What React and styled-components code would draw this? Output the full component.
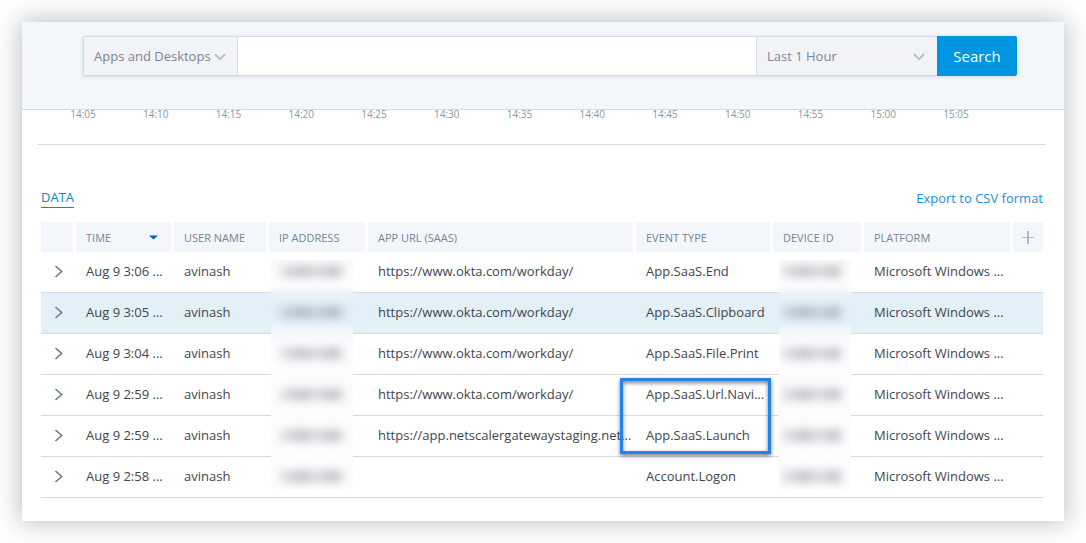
import React from 'react';
import styled, { createGlobalStyle } from 'styled-components';

const GlobalStyle = createGlobalStyle`
  * {
    box-sizing: border-box;
  }
  body {
    margin: 0;
    background-color: #fff;
    font-family: 'Open Sans', 'Noto Sans', sans-serif;
    font-size: 13px;
    color: #43454d;
  }
  button, input, select {
    font-family: inherit;
  }
`;

const Panel = styled.main`
  margin: 22px;
  padding-bottom: 23px;
  background-color: #fff;
  box-shadow: 0 0 24px 2px rgba(70, 80, 92, 0.36);
`;

const Header = styled.header`
  padding: 14px 47px 33px 61px;
  background-color: #f3f7fc;
  border-bottom: 1px solid #d7dbe1;
`;

const SearchForm = styled.form`
  display: flex;
  height: 40px;
  box-shadow: 0 1px 4px rgba(60, 70, 80, 0.14);
`;

const SelectWrapper = styled.div`
  position: relative;
  flex: 0 0 ${({ $width }) => $width}px;
  & > svg {
    position: absolute;
    top: 17px;
    right: ${({ $iconRight }) => $iconRight}px;
    pointer-events: none;
  }
`;

const Select = styled.select`
  display: block;
  width: 100%;
  height: 40px;
  padding: 0 10px;
  appearance: none;
  border: 1px solid #d7dbe1;
  border-right: 0;
  border-radius: 0;
  background-color: #f2f3f7;
  color: #788596;
  font-size: 13px;
`;

const SearchInput = styled.input`
  flex: 1;
  min-width: 0;
  height: 40px;
  padding: 0 10px;
  border: 1px solid #d7dbe1;
  border-right: 0;
  border-radius: 0;
  background-color: #fff;
  font-size: 13px;
`;

const SearchButton = styled.button`
  flex: 0 0 80px;
  height: 40px;
  padding: 0;
  border: 0;
  border-radius: 0 2px 2px 0;
  background-color: #0095e0;
  color: #fff;
  font-size: 15px;
  cursor: pointer;
`;

const Axis = styled.div`
  display: flex;
  justify-content: space-between;
  padding: 0 93px 26px 46px;
  color: #8a979f;
  font-size: 10px;
  line-height: 8px;
`;

const Tick = styled.span`
  width: 30px;
  text-align: center;
`;

const Divider = styled.hr`
  margin: 0 18px 0 16px;
  border: 0;
  border-top: 1px solid #d7dbe1;
`;

const DataSection = styled.section`
  padding: 43px 21px 0 19px;
`;

const Toolbar = styled.div`
  display: flex;
  justify-content: space-between;
  align-items: flex-start;
  height: 34px;
`;

const Tab = styled.button`
  padding: 0;
  border: 0;
  border-bottom: 1px solid #0a86c4;
  background: none;
  color: #0a86c4;
  font-size: 13px;
  line-height: 19px;
  cursor: pointer;
`;

const ExportLink = styled.a`
  color: #1c8edb;
  font-size: 13px;
  line-height: 20px;
  text-decoration: none;
`;

const Table = styled.table`
  width: 100%;
  table-layout: fixed;
  border-spacing: 0;
`;

const Col = styled.col`
  width: ${({ $width }) => $width ? `${$width}px` : 'auto'};
`;

const HeadCell = styled.th`
  height: 30px;
  padding: 0 10px;
  border-right: 3px solid #fff;
  background-color: #f3f7fc;
  color: #788590;
  font-size: 11px;
  font-weight: 400;
  text-align: left;
  white-space: nowrap;
  &:last-child {
    padding: 0;
    border-right: 0;
  }
`;

const SortButton = styled.button`
  display: flex;
  justify-content: space-between;
  align-items: center;
  width: 100%;
  padding: 0 3px 0 0;
  border: 0;
  background: none;
  color: inherit;
  font-size: 11px;
  cursor: pointer;
`;

const IconButton = styled.button`
  display: flex;
  justify-content: center;
  align-items: center;
  width: 100%;
  height: 30px;
  padding: 0;
  border: 0;
  background: none;
  cursor: pointer;
`;

const Row = styled.tr`
  background-color: ${({ $selected }) => $selected ? '#e4f0f8' : '#fff'};
`;

const Cell = styled.td`
  position: relative;
  height: 41px;
  padding: 0 0 2px ${({ $flush }) => $flush ? 0 : 10}px;
  border-bottom: 1px solid #d7dbe1;
  font-size: 13px;
  white-space: nowrap;
`;

const patchFill = {
  first: 'linear-gradient(#fafafb, #fdfdfe 24px, #f0f7fb)',
  selected: 'linear-gradient(#eaf3f9, #e2eff7 14px, #e4f0f8 28px, #f3f9fc)',
  after: 'linear-gradient(#f4f9fc, #fcfcfd 10px)',
  last: '#fcfcfd',
  plain: '#fcfcfd',
};

const Patch = styled.div`
  position: absolute;
  top: ${({ $fill }) => $fill === 'first' ? 8 : 0}px;
  bottom: ${({ $fill }) => $fill === 'last' ? 8 : -1}px;
  left: ${({ $left }) => $left}px;
  width: ${({ $width }) => $width}px;
  padding: ${({ $fill }) => $fill === 'first' ? 6 : 14}px 10px 0 ${({ $inset }) => $inset}px;
  background: ${({ $fill }) => patchFill[$fill]};
  overflow: hidden;
`;

const Smudge = styled.div`
  height: 11px;
  background: repeating-linear-gradient(
    90deg,
    rgba(90, 86, 100, 0.24) 0 12px,
    rgba(90, 86, 100, 0.36) 16px 26px,
    rgba(90, 86, 100, 0.24) 30px
  );
  filter: blur(5px);
`;

const Highlight = styled.div`
  position: absolute;
  z-index: 1;
  top: 3px;
  right: 2px;
  left: -16px;
  height: 76px;
  border: 3px solid #2482e8;
  box-shadow: 0 2px 4px rgba(0, 0, 0, 0.5), inset 0 2px 4px rgba(0, 0, 0, 0.5);
  pointer-events: none;
`;

const ChevronDown = () => (
  <svg width="12" height="8" viewBox="0 0 12 8" fill="none" stroke="#b9c0ca" strokeWidth="2">
    <path d="M1 1.2 6 6.2 11 1.2" />
  </svg>
);

const ChevronRight = () => (
  <svg width="9" height="13" viewBox="0 0 9 13" fill="none" stroke="#647887" strokeWidth="1.5">
    <path d="M1.5 1 7.7 6.5 1.5 12" />
  </svg>
);

const SortArrow = () => (
  <svg width="9" height="5" viewBox="0 0 9 5" fill="#00689b">
    <path d="M0 0.5H9L4.5 4.5Z" />
  </svg>
);

const Plus = () => (
  <svg width="13" height="13" viewBox="0 0 13 13" fill="none" stroke="#b1b9c8">
    <path d="M0 6.5H12" />
    <path strokeWidth="2" d="M6 0V13" />
  </svg>
);

const ticks = ['14:05', '14:10', '14:15', '14:20', '14:25', '14:30', '14:35', '14:40', '14:45', '14:50', '14:55', '15:00', '15:05'];

const widths = [35, 98, 95, 99, null, 137, 91, 149, 30];

const okta = 'https://www.okta.com/workday/';

const events = [
  { time: 'Aug 9 3:06 ...', url: okta, type: 'App.SaaS.End', fill: 'first' },
  { time: 'Aug 9 3:05 ...', url: okta, type: 'App.SaaS.Clipboard', fill: 'selected' },
  { time: 'Aug 9 3:04 ...', url: okta, type: 'App.SaaS.File.Print', fill: 'after' },
  { time: 'Aug 9 2:59 ...', url: okta, type: 'App.SaaS.Url.Navi...', fill: 'plain', highlight: true },
  { time: 'Aug 9 2:59 ...', url: 'https://app.netscalergatewaystaging.net...', type: 'App.SaaS.Launch', fill: 'plain' },
  { time: 'Aug 9 2:58 ...', url: '', type: 'Account.Logon', fill: 'last' },
];

const SearchBar = () => (
  <SearchForm onSubmit={e => e.preventDefault()}>
    <SelectWrapper $width={154} $iconRight={11}>
      <Select aria-label="Data source" defaultValue="apps">
        <option value="apps">Apps and Desktops</option>
      </Select>
      <ChevronDown />
    </SelectWrapper>
    <SearchInput type="text" aria-label="Search query" />
    <SelectWrapper $width={181} $iconRight={12}>
      <Select aria-label="Time range" defaultValue="hour">
        <option value="hour">Last 1 Hour</option>
      </Select>
      <ChevronDown />
    </SelectWrapper>
    <SearchButton type="submit">Search</SearchButton>
  </SearchForm>
);

const EventRow = ({ event }) => (
  <Row $selected={event.fill === 'selected'}>
    <Cell $flush>
      <IconButton type="button" aria-label="Expand row"><ChevronRight /></IconButton>
    </Cell>
    <Cell>{event.time}</Cell>
    <Cell>avinash</Cell>
    <Cell><Patch $fill={event.fill} $left={2} $width={82} $inset={10}><Smudge /></Patch></Cell>
    <Cell>{event.url}</Cell>
    <Cell>
      {event.type}
      {event.highlight && <Highlight />}
    </Cell>
    <Cell><Patch $fill={event.fill} $left={6} $width={72} $inset={4}><Smudge /></Patch></Cell>
    <Cell>Microsoft Windows ...</Cell>
    <Cell />
  </Row>
);

const EventTable = () => (
  <Table>
    <colgroup>
      {widths.map((width, i) => <Col key={i} $width={width} />)}
    </colgroup>
    <thead>
      <tr>
        <HeadCell />
        <HeadCell><SortButton type="button">TIME<SortArrow /></SortButton></HeadCell>
        <HeadCell>USER NAME</HeadCell>
        <HeadCell>IP ADDRESS</HeadCell>
        <HeadCell>APP URL (SAAS)</HeadCell>
        <HeadCell>EVENT TYPE</HeadCell>
        <HeadCell>DEVICE ID</HeadCell>
        <HeadCell>PLATFORM</HeadCell>
        <HeadCell><IconButton type="button" aria-label="Add column"><Plus /></IconButton></HeadCell>
      </tr>
    </thead>
    <tbody>
      {events.map((event, i) => <EventRow key={i} event={event} />)}
    </tbody>
  </Table>
);

export default function App() {
  return (
    <>
      <GlobalStyle />
      <Panel>
        <Header>
          <SearchBar />
        </Header>
        <Axis>
          {ticks.map(tick => <Tick key={tick}>{tick}</Tick>)}
        </Axis>
        <Divider />
        <DataSection>
          <Toolbar>
            <Tab type="button">DATA</Tab>
            <ExportLink href="#export">Export to CSV format</ExportLink>
          </Toolbar>
          <EventTable />
        </DataSection>
      </Panel>
    </>
  );
}
